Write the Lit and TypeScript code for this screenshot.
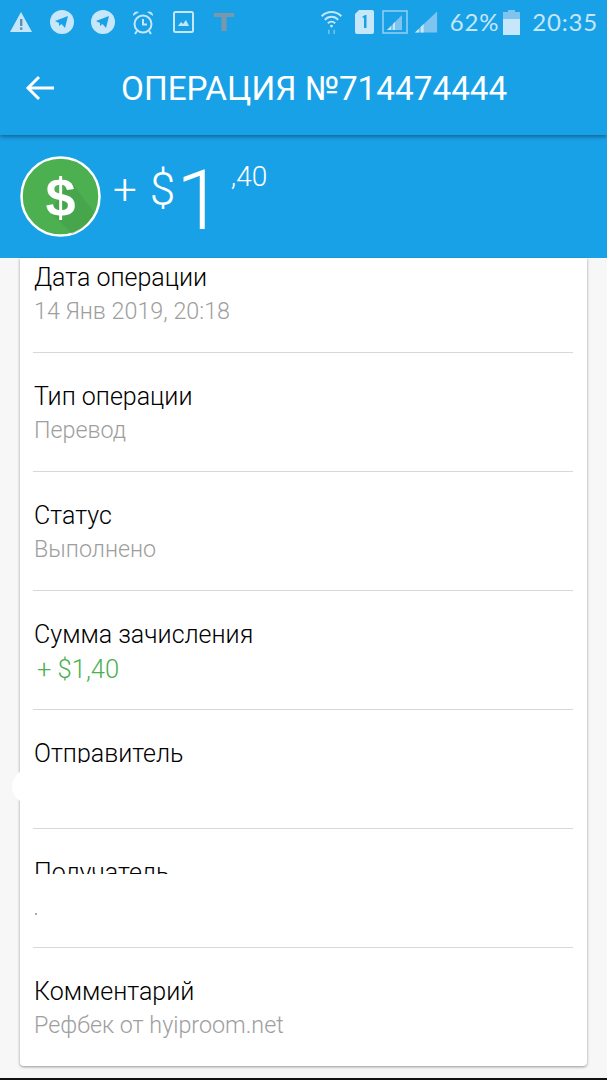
import { LitElement, html, css } from "lit";
import { customElement } from "lit/decorators.js";

@customElement("app-root")
export class AppRoot extends LitElement {
  static styles = css`
    :host { display: block; width: 607px; height: 1080px; background: #f7f7f7; font-family: Roboto, sans-serif; position: relative; overflow: hidden; }
    .top { background: #19a1e8; height: 135px; display: flex; flex-direction: column; position: relative; z-index: 2; box-shadow: 0 2px 4px rgba(0,0,0,.35); }
    .status { height: 42px; margin-top: 1px; display: flex; align-items: center; color: #c6e6fa; padding: 0 9px 0 10px; }
    .status svg { display: block; flex: none; }
    .left { display: flex; align-items: center; gap: 17px; }
    .right { margin-left: auto; display: flex; align-items: center; }
    .stxt { font-family: Lato, sans-serif; font-size: 24px; letter-spacing: .8px; line-height: 24px; }
    .bar { flex: 1; display: flex; align-items: center; padding-top: 1px; padding-bottom: 3px; }
    .back { margin-left: 25px; flex: none; }
    .title { color: #fff; font-size: 33.300px; margin-left: 66px; white-space: nowrap; }
    .hero { background: #19a1e8; height: 123px; display: flex; align-items: flex-start; padding: 21px 0 0 20px; box-sizing: border-box; color: #fff; font-weight: 300; }
    .coin { flex: none; display: block; }
    .plus { font-size: 42px; line-height: 42px; margin: 13px 0 0 12px; }
    .cur { font-size: 46px; line-height: 46px; margin: 10px 0 0 13px; }
    .int { font-size: 84px; line-height: 84px; margin: 3px 0 0 1px; }
    .cents { font-size: 28px; line-height: 28px; margin: 7px 0 0 8px; }
    .card { margin: 0 20px; height: 808px; background: #fff; border-radius: 0 0 4px 4px; box-shadow: 0 1px 3px rgba(0,0,0,.4); padding: 0 14px 0 13px; box-sizing: border-box; }
    .row { height: 119px; border-bottom: 1px solid #d8d8d8; box-sizing: border-box; padding-top: 28px; position: relative; }
    .row.first { height: 95px; padding-top: 4px; }
    .row.last { border-bottom: none; }
    .label { font-size: 25px; line-height: 32px; font-weight: 300; color: #000; white-space: nowrap; margin-left: 1px; }
    .value { font-size: 23.300px; line-height: 34px; font-weight: 300; color: #9e9e9e; white-space: nowrap; margin-left: 1px; }
    .value.green { color: #4caf50; padding-left: 3px; font-size: 25.500px; line-height: 36px; }
    .clip1 { height: 25px; overflow: hidden; }
    .clip2 { height: 17px; overflow: hidden; }
    .dot { margin-top: 39px; margin-left: 2px; width: 2px; height: 2px; background: #aaa; }
    .blob { position: absolute; left: 12px; top: 769px; width: 50px; height: 35px; background: #fff; border-radius: 18px; z-index: 3; }
    .nav { position: absolute; left: 0; right: 0; bottom: 0; height: 2px; background: #111; }
    .mg1 { margin-left: 1px; }
    .mg2 { margin-left: 2px; }
    .mg3 { margin-left: 3px; }
  `;

  row(label: string, value: string, cls = "") {
    return html`<div class="row ${cls}"><div class="label">${label}</div><div class="value">${value}</div></div>`;
  }

  render() {
    const c = "#c6e6fa";
    return html`
      <div class="top">
        <div class="status">
          <div class="left">
            <svg width="22" height="22" viewBox="0 0 22 22"><path d="M11 1 L22 21 H0 Z" fill="${c}"/><rect x="10" y="8" width="2.400" height="7" fill="#5d8fb0"/><rect x="10" y="16.400" width="2.400" height="2.400" fill="#5d8fb0"/></svg>
            <svg class="mg1" width="24" height="24" viewBox="0 0 24 24"><circle cx="12" cy="12" r="12" fill="${c}"/><path d="M5 11 L18 6 L15 18 L11.500 14 L9 16 L9 13 Z" fill="#19a1e8"/></svg>
            <svg width="24" height="24" viewBox="0 0 24 24"><circle cx="12" cy="12" r="12" fill="${c}"/><path d="M5 11 L18 6 L15 18 L11.500 14 L9 16 L9 13 Z" fill="#19a1e8"/></svg>
            <svg width="22" height="25" viewBox="0 0 22 25" fill="none" stroke="${c}" stroke-width="2"><circle cx="11" cy="14" r="8.500"/><path d="M11 9 V14.500 H15"/><path d="M1 6 A4 4 0 0 1 7 2 Z M21 6 A4 4 0 0 0 15 2 Z" fill="${c}" stroke="none"/><path d="M5 21 L3 24 M17 21 L19 24"/></svg>
            <svg class="mg2" width="21" height="22" viewBox="0 0 21 22"><rect x="1" y="1" width="19" height="20" rx="1.500" fill="none" stroke="${c}" stroke-width="2"/><path d="M5 15 L8 11 L10 13 L13 9 L16 15 Z" fill="${c}"/></svg>
            <svg class="mg3" width="20" height="18" viewBox="0 0 20 18"><path d="M0 0 H20 V4 H12.500 V18 H7.500 V4 H0 Z" fill="#7c97aa"/></svg>
          </div>
          <div class="right">
            <svg width="23" height="25" viewBox="0 0 24 28" fill="none" stroke="${c}" stroke-width="2.200"><path d="M1 7 A15 15 0 0 1 23 7"/><path d="M4.500 11 A10 10 0 0 1 19.500 11"/><path d="M8 15 A5 5 0 0 1 16 15"/><circle cx="12" cy="18" r="1.600" fill="${c}" stroke="none"/><path d="M9 22 V27 M15 22 V27" stroke="#7fc4ee" stroke-width="1.600"/></svg>
            <svg width="19" height="24" viewBox="0 0 19 24" style="margin-left:12px"><path d="M4 0 H17 Q19 0 19 2 V22 Q19 24 17 24 H2 Q0 24 0 22 V4 Z" fill="${c}"/><path d="M7 7 L10 5 H11.500 V18 H9 V8 Z" fill="#19a1e8"/></svg>
            <svg width="26" height="24" viewBox="0 0 26 24" style="margin-left:8px"><rect x="1" y="1" width="24" height="22" fill="none" stroke="#8fcdf2" stroke-width="1.600"/><path d="M5 20 L20 5 V20 Z" fill="#7fc4ee"/><path d="M5 20 L9 16 V20 Z M11 20 V14 L13 12 V20 Z" fill="${c}"/></svg>
            <svg width="23" height="24" viewBox="0 0 24 24" style="margin-left:7px"><path d="M0 23 L23 1 V23 Z" fill="#7fc4ee"/><path d="M0 23 L4 19 V23 Z M6 23 V17 L9 14 V23 Z" fill="${c}"/></svg>
            <span class="stxt" style="margin-left:12px">62%</span>
            <svg width="17" height="25" viewBox="0 0 17 25" style="margin-left:4px"><rect x="5" y="0" width="7" height="3" fill="#7fc4ee"/><rect x="0" y="2" width="17" height="7" fill="#7fc4ee"/><rect x="0" y="9" width="17" height="16" fill="${c}"/></svg>
            <span class="stxt" style="margin-left:12px">20:35</span>
          </div>
        </div>
        <div class="bar">
          <svg class="back" width="30" height="26" viewBox="0 0 30 26" fill="none" stroke="#fff" stroke-width="3"><path d="M29 13 H3"/><path d="M14 2 L3 13 L14 24"/></svg>
          <div class="title">ОПЕРАЦИЯ №714474444</div>
        </div>
      </div>
      <div class="hero">
        <svg class="coin" width="81" height="81" viewBox="0 0 81 81">
          <circle cx="40.500" cy="40.500" r="39" fill="#4caf50" stroke="#fff" stroke-width="2.500"/>
          <path d="M50 24 L74 56 A39 39 0 0 1 52 78 L30 56 Z" fill="#429a46" opacity=".45"/>
          <text x="40.500" y="60" text-anchor="middle" font-family="Liberation Sans, sans-serif" font-weight="700" font-size="54" fill="#fff">$</text>
        </svg>
        <span class="plus">+</span><span class="cur">$</span><span class="int">1</span><span class="cents">,40</span>
      </div>
      <div class="card">
        ${this.row("Дата операции", "14 Янв 2019, 20:18", "first")}
        ${this.row("Тип операции", "Перевод")}
        ${this.row("Статус", "Выполнено")}
        <div class="row"><div class="label">Сумма зачисления</div><div class="value green">+ $1,40</div></div>
        <div class="row"><div class="label clip1">Отправитель</div></div>
        <div class="row"><div class="label clip2">Получатель</div><div class="dot"></div></div>
        ${this.row("Комментарий", "Рефбек от hyiproom.net", "last")}
      </div>
      <div class="blob"></div>
      <div class="nav"></div>
    `;
  }
}
